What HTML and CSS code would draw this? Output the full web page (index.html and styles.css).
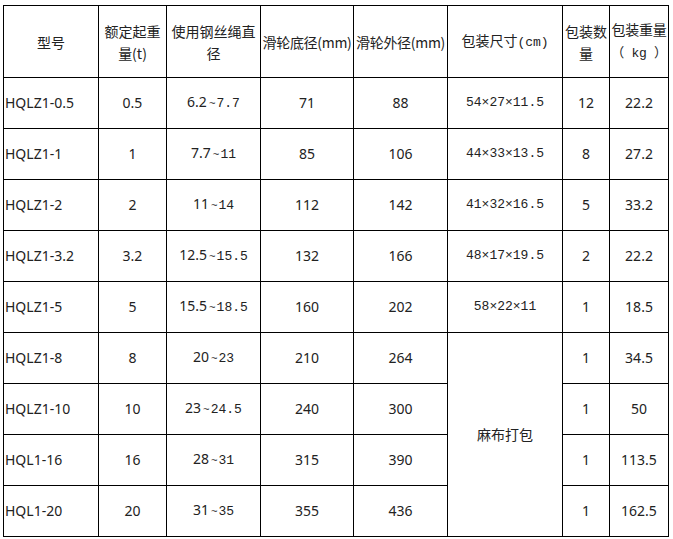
FILE: index.html
```html
<!DOCTYPE html>
<html lang="zh">
<head>
<meta charset="utf-8">
<link rel="stylesheet" href="styles.css">
</head>
<body>
<table class="spec">
<colgroup>
<col class="c1"><col class="c2"><col class="c3"><col class="c4"><col class="c5"><col class="c6"><col class="c7"><col class="c8">
</colgroup>
<tr class="head">
<td>型号</td>
<td>额定起重量(t)</td>
<td>使用钢丝绳直径</td>
<td class="tight">滑轮底径(mm)</td>
<td class="tight">滑轮外径(mm)</td>
<td>包装尺寸<span class="m">(cm)</span></td>
<td>包装数量</td>
<td class="tight">包装重量<br><span class="m">（ kg ）</span></td>
</tr>
<tr><td class="model">HQLZ1-0.5</td><td>0.5</td><td>6.2<span class="m"><span class="t">~</span>7.7</span></td><td>71</td><td>88</td><td class="m">54×27×11.5</td><td>12</td><td>22.2</td></tr>
<tr><td class="model">HQLZ1-1</td><td>1</td><td>7.7<span class="m"><span class="t">~</span>11</span></td><td>85</td><td>106</td><td class="m">44×33×13.5</td><td>8</td><td>27.2</td></tr>
<tr><td class="model">HQLZ1-2</td><td>2</td><td>11<span class="m"><span class="t">~</span>14</span></td><td>112</td><td>142</td><td class="m">41×32×16.5</td><td>5</td><td>33.2</td></tr>
<tr><td class="model">HQLZ1-3.2</td><td>3.2</td><td>12.5<span class="m"><span class="t">~</span>15.5</span></td><td>132</td><td>166</td><td class="m">48×17×19.5</td><td>2</td><td>22.2</td></tr>
<tr><td class="model">HQLZ1-5</td><td>5</td><td>15.5<span class="m"><span class="t">~</span>18.5</span></td><td>160</td><td>202</td><td class="m">58×22×11</td><td>1</td><td>18.5</td></tr>
<tr><td class="model">HQLZ1-8</td><td>8</td><td>20<span class="m"><span class="t">~</span>23</span></td><td>210</td><td>264</td><td rowspan="4">麻布打包</td><td>1</td><td>34.5</td></tr>
<tr><td class="model">HQLZ1-10</td><td>10</td><td>23<span class="m"><span class="t">~</span>24.5</span></td><td>240</td><td>300</td><td>1</td><td>50</td></tr>
<tr><td class="model">HQL1-16</td><td>16</td><td>28<span class="m"><span class="t">~</span>31</span></td><td>315</td><td>390</td><td>1</td><td>113.5</td></tr>
<tr><td class="model">HQL1-20</td><td>20</td><td>31<span class="m"><span class="t">~</span>35</span></td><td>355</td><td>436</td><td>1</td><td>162.5</td></tr>
</table>
</body>
</html>
```
FILE: styles.css
```css
html, body {
  margin: 0;
  background: #ffffff;
}
body {
  padding: 5px 0 0 3px;
  font-family: "Noto Sans", "Noto Sans CJK SC", sans-serif;
  font-size: 14px;
  color: #222222;
}
.spec {
  border-collapse: collapse;
  table-layout: fixed;
  width: 666px;
}
.c1 { width: 95px; }
.c2 { width: 68px; }
.c3 { width: 94px; }
.c4 { width: 93px; }
.c5 { width: 94px; }
.c6 { width: 115px; }
.c7 { width: 47px; }
.c8 { width: 59px; }
.spec td {
  border: 1px solid #000000;
  height: 50px;
  padding: 0 2px;
  text-align: center;
  vertical-align: middle;
  line-height: 20px;
  overflow: hidden;
}
.spec .head td {
  height: 71px;
  line-height: 22px;
  font-family: "Noto Sans CJK SC", sans-serif;
  word-break: break-all;
}
.spec .head td.tight {
  padding: 0;
  white-space: nowrap;
  letter-spacing: -0.3px;
}
.spec td.model {
  text-align: left;
  padding-left: 1px;
}
.m {
  font-family: "Liberation Mono", "Noto Sans CJK SC", monospace;
  font-size: 13px;
}
.t {
  display: inline-block;
  margin: 0 1px 0 2px;
  font-size: 11px;
}
```
